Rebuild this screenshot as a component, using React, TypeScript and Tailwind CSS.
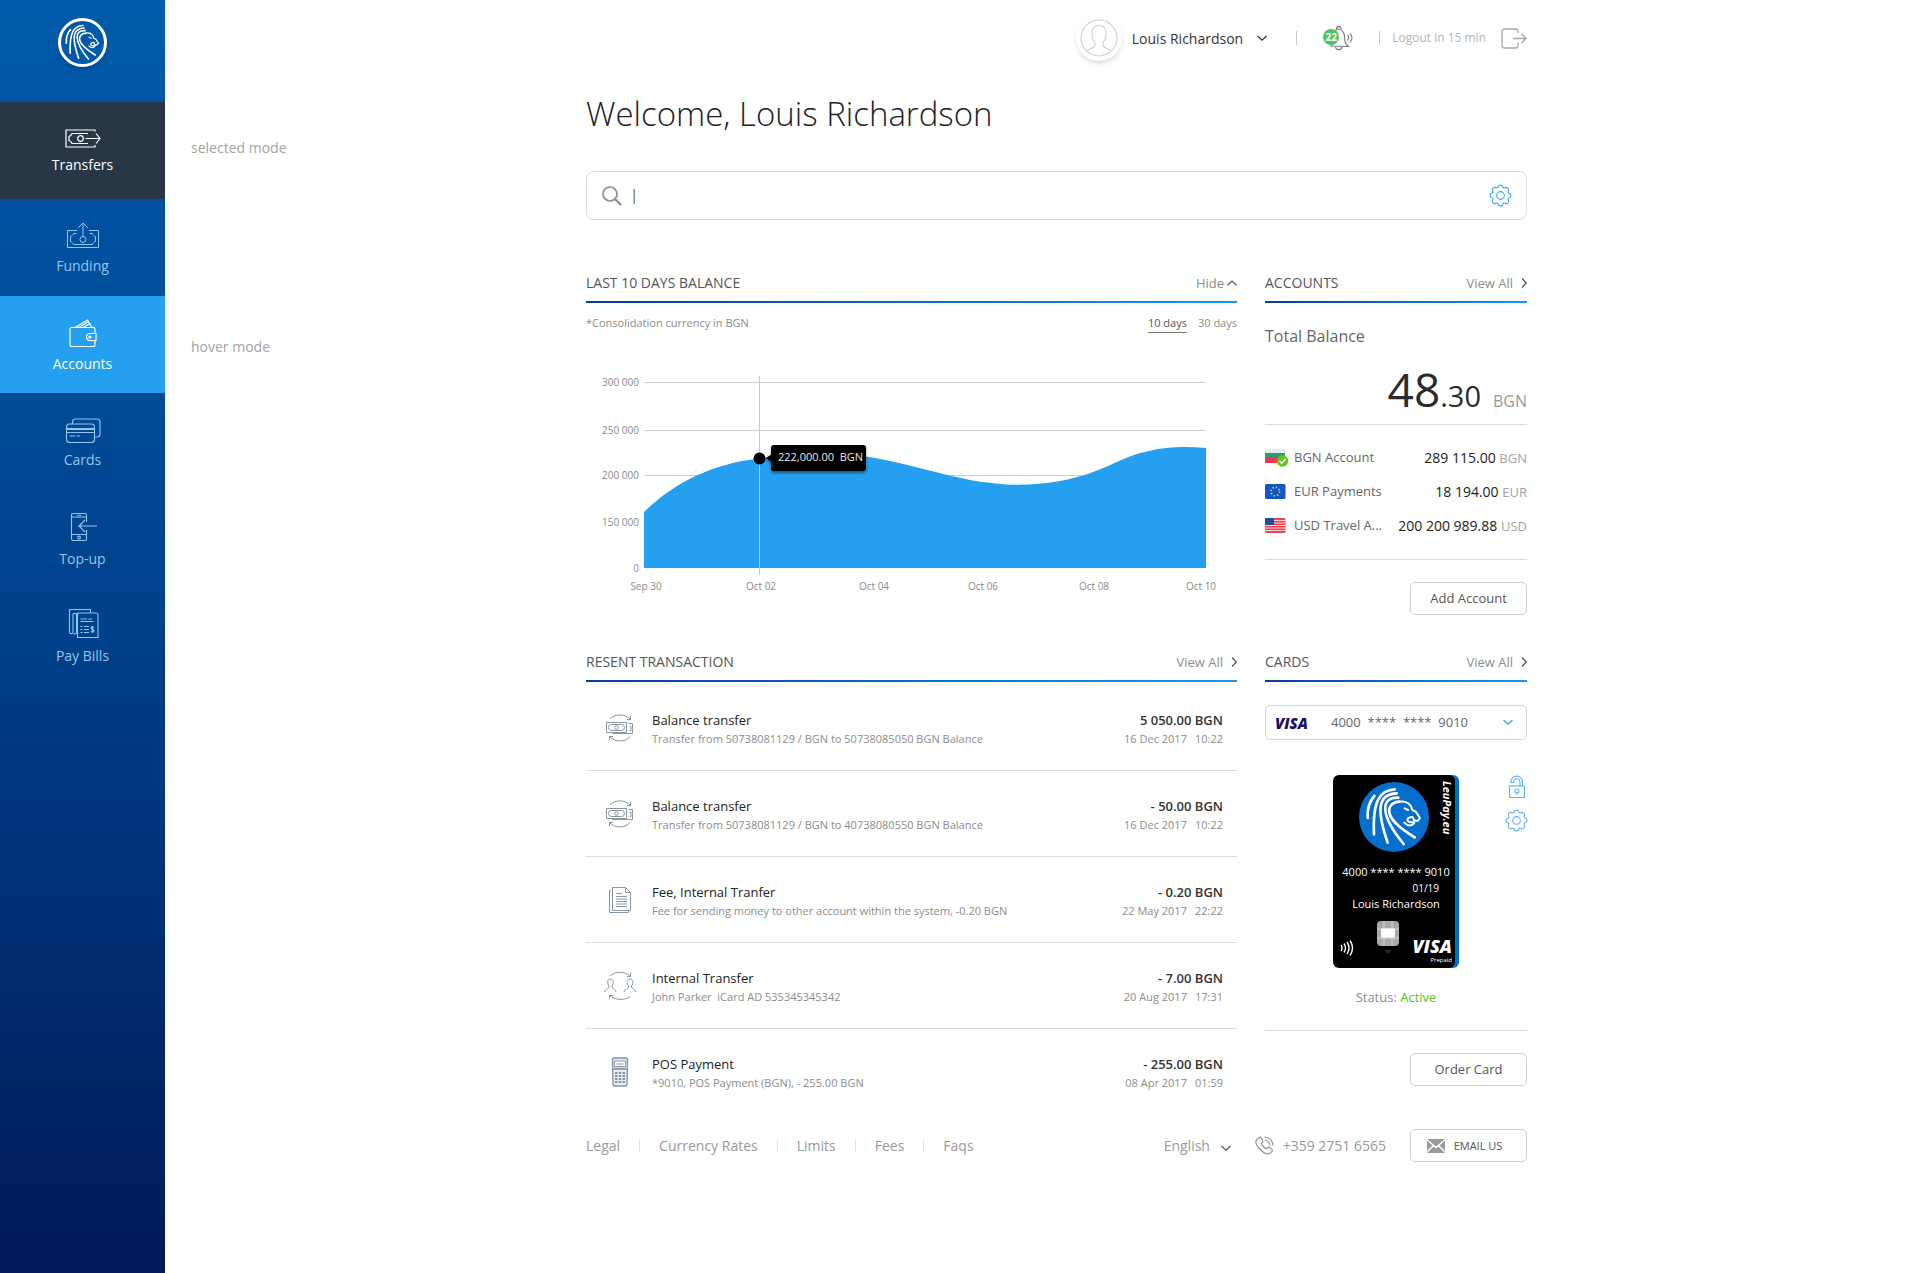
import React, { useState } from 'react';
import clsx from 'clsx';

type IconProps = { className?: string };

const LionMark = ({ className }: IconProps) => (
  <svg viewBox="0 0 210 210" className={className} fill="none" stroke="currentColor" strokeLinecap="round" strokeLinejoin="round">
    <g strokeWidth="8">
      <path d="M46 42 C32 58 24 84 26 108" />
      <path d="M107 22 C64 24 40 56 45 157" />
      <path d="M113 34 C56 36 52 84 86 182" />
      <path d="M118 47 C66 44 60 96 134 186" />
      <path d="M122 59 C98 60 86 76 92 96 C100 122 136 146 167 166" />
    </g>
    <g strokeWidth="6">
      <path d="M122 59 C142 56 156 66 160 84 L170 89 L183 108 L176 117 L165 115 L161 105 C150 104 142 112 147 118 C154 124 164 118 166 122 C160 134 144 132 136 122" />
      <path d="M137 79 L147 84" />
    </g>
  </svg>
);

const TransfersIcon = () => (
  <svg width="36" height="19" viewBox="0 0 36 19" fill="none" stroke="currentColor" strokeWidth="1.2">
    <path d="M30 2.5V1H1v17h29v-2" />
    <path d="M23 4.5H7C6.500 6 5.500 7 4 7.500v4c1.500.5 2.500 1.500 3 3h16" />
    <circle cx="15.500" cy="9.500" r="2.800" />
    <path d="M20.500 9.500H35M31 4.500l4 5-4 5" />
  </svg>
);

const FundingIcon = () => (
  <svg width="34" height="27" viewBox="0 0 34 27" fill="none" stroke="currentColor">
    <path d="M11 8.500H1.500v17h31v-17H23" />
    <path d="M10.500 11.500H7.500c-.5 1.500-1.500 2.500-3 3v5c1.500.5 2.500 1.500 3 3h19c.5-1.500 1.500-2.500 3-3v-5c-1.500-.5-2.500-1.500-3-3h-3" />
    <circle cx="17" cy="17.500" r="3" />
    <path d="M17 14.500V1M12 6l5-5 5 5" />
  </svg>
);

const WalletIcon = () => (
  <svg width="28" height="28" viewBox="0 0 28 28" fill="none" stroke="currentColor" strokeWidth="1.200">
    <path d="M26 14.500V10a1.500 1.500 0 0 0-1.500-1.500h-22A1.500 1.500 0 0 0 1 10v16a1.500 1.500 0 0 0 1.500 1.500h22A1.500 1.500 0 0 0 26 26v-4.500" />
    <path d="M27 14.500h-6a3.500 3.500 0 0 0 0 7h6z" />
    <circle cx="21" cy="18" r="1" />
    <path d="M6 8.500L18.500 1 23 8.500M9.500 8.500l10.500-6M14 8.500l7-4" />
  </svg>
);

const CardsIcon = () => (
  <svg width="36" height="26" viewBox="0 0 36 26" fill="none" stroke="currentColor" strokeWidth="1.100">
    <rect x="1.500" y="7" width="28" height="18.500" rx="3" />
    <path d="M7.500 7V5a3 3 0 0 1 3-3H32a3 3 0 0 1 3 3v12a3 3 0 0 1-3 3h-2" />
    <path d="M1.500 12h28" strokeWidth="2" />
    <path d="M1.500 15.500h28M4.500 19h5.500M11.500 19h3.500" />
  </svg>
);

const TopUpIcon = () => (
  <svg width="28" height="30" viewBox="0 0 28 30" fill="none" stroke="currentColor" strokeWidth="1.100">
    <path d="M17.500 10V3A1.500 1.500 0 0 0 16 1.500H4A1.500 1.500 0 0 0 2.500 3v24A1.500 1.500 0 0 0 4 28.500h12a1.500 1.500 0 0 0 1.500-1.500V18" />
    <path d="M2.500 5h15M2.500 22.500h15M8 3.300h4" />
    <circle cx="10" cy="25.500" r="1.400" />
    <path d="M28 14H10M16 8l-6 6 6 6" />
  </svg>
);

const BillsIcon = () => (
  <svg width="32" height="30" viewBox="0 0 32 30" fill="none" stroke="currentColor" strokeWidth="1.100">
    <path d="M23.500 3.500v-3h-21v23c0 1.500 3.500 1.500 3.500 0v-18c0-1.500 3.500-1.500 3.500 0v18c0 1.300-2 1.500-3 1.500" />
    <path d="M10.500 28.500V4h18.500a2 2 0 0 1 2 2v22.500z" />
    <path d="M13.500 10h6.500M21.500 10H25M13.500 12.500h13M13.500 17.500h2M17 17.500h5M13.500 20.500h2M17 20.500h5M13.500 23.500h2M17 23.500h5" />
    <path d="M27 18.500c-1-1.200-3-.8-3 .5 0 1.600 3 1 3 2.700 0 1.500-2.300 1.800-3.200.5M25.500 17v7" />
  </svg>
);

const GearIcon = ({ className }: IconProps) => (
  <svg viewBox="0 0 24 24" className={className} fill="none" stroke="currentColor" strokeWidth="1.200" strokeLinejoin="round">
    <path d="M9.680 2.690A2.500 2.500 0 0 1 14.320 2.690A1.600 1.600 0 0 0 16.940 3.770A2.500 2.500 0 0 1 20.230 7.060A1.600 1.600 0 0 0 21.310 9.680A2.500 2.500 0 0 1 21.310 14.320A1.600 1.600 0 0 0 20.230 16.940A2.500 2.500 0 0 1 16.940 20.230A1.600 1.600 0 0 0 14.320 21.310A2.500 2.500 0 0 1 9.680 21.310A1.600 1.600 0 0 0 7.060 20.230A2.500 2.500 0 0 1 3.770 16.940A1.600 1.600 0 0 0 2.690 14.320A2.500 2.500 0 0 1 2.690 9.680A1.600 1.600 0 0 0 3.770 7.060A2.500 2.500 0 0 1 7.060 3.770A1.600 1.600 0 0 0 9.680 2.690Z" />
    <circle cx="12" cy="12" r="4" />
  </svg>
);

const Chevron = ({ className, d }: IconProps & { d: string }) => (
  <svg width="10" height="10" viewBox="0 0 10 10" className={className} fill="none" stroke="currentColor" strokeWidth="1.200">
    <path d={d} />
  </svg>
);

const DOWN = 'M.5 3L5 7.200 9.500 3';
const UP = 'M.5 7.200L5 3l4.500 4.200';
const RIGHT = 'M5 .5L9.300 5 5 9.500';

const BalanceIcon = () => (
  <svg viewBox="0 0 32 32" className="size-8" fill="none" stroke="currentColor">
    <path d="M6 7C10 2 21 1 26.500 7.500M26.500 4v3.500H23M26 24.500C21 30.500 11 30.500 5.500 24.500M5.500 28v-3.500H9" />
    <path d="M2.500 10.500h20v10h-20zM24.500 11.500h4v10h-20M25.500 14.500h1.500v4h-1.500" />
    <rect x="4.500" y="12.500" width="16" height="6" rx="3" />
    <circle cx="12.500" cy="15.500" r="1.800" />
  </svg>
);

const FeeIcon = () => (
  <svg viewBox="0 0 32 32" className="size-8" fill="none" stroke="currentColor">
    <path d="M8.500 26.500v-23h13l5 5v18zM21.500 3.500v5h5" />
    <path d="M7 6.500H5.500v22h19V27" />
    <path d="M12 9.500h6M12 12.500h11M12 15h11M12 17.500h11M12 20h11M12 22.500h11" />
  </svg>
);

const PeopleIcon = () => (
  <svg viewBox="0 0 32 32" className="size-8" fill="none" stroke="currentColor">
    <path d="M6 6C11 1 21 1 26.500 6.500M26.500 3v3.500H23M26 26.500C21 30.500 11 30.500 5.500 25.500M5.500 29v-3.500H9" />
    <path d="M.5 22c.5-4 5-2.500 4.500-6-2-2.500-2-7 1.500-7s3.500 4.500 1.500 7c-.5 3.500 3.500 2 4 6" />
    <path d="M20 22c.5-4 5-2.500 4.500-6-2-2.500-2-7 1.500-7s3.500 4.500 1.500 7c-.5 3.500 3.500 2 4 6" />
  </svg>
);

const PosIcon = () => (
  <svg viewBox="0 0 32 32" className="size-8" fill="none" stroke="currentColor">
    <path d="M8.500 3.500a1.500 1.500 0 0 1 1.500-1.500h12a1.500 1.500 0 0 1 1.500 1.500L23 28.500a1.500 1.500 0 0 1-1.500 1.500h-11A1.500 1.500 0 0 1 9 28.500z" fill="#e9eef3" strokeWidth="1.400" />
    <path d="M10.500 5h11v5.500h-11zM12.500 8h7" fill="#fff" />
    <path d="M9.500 12.800h13" strokeWidth="2" />
    <path d="M11 17h2.500M14.800 17h2.500M18.500 17h2.500M11 20h2.500M14.800 20h2.500M18.500 20h2.500M11 23h2.500M14.800 23h2.500M18.500 23h2.500M11 26h2.500M14.800 26h2.500M18.500 26h2.500" strokeWidth="2" />
  </svg>
);

const navItems = [
  { label: 'Transfers', icon: TransfersIcon, state: 'selected' },
  { label: 'Funding', icon: FundingIcon },
  { label: 'Accounts', icon: WalletIcon, state: 'hover' },
  { label: 'Cards', icon: CardsIcon },
  { label: 'Top-up', icon: TopUpIcon },
  { label: 'Pay Bills', icon: BillsIcon },
];

const transactions = [
  { icon: BalanceIcon, title: 'Balance transfer', note: 'Transfer from 50738081129 / BGN to 50738085050 BGN Balance', amount: '5 050.00 BGN', date: '16 Dec 2017', time: '10:22' },
  { icon: BalanceIcon, title: 'Balance transfer', note: 'Transfer from 50738081129 / BGN to 40738080550 BGN Balance', amount: '- 50.00 BGN', date: '16 Dec 2017', time: '10:22' },
  { icon: FeeIcon, title: 'Fee, Internal Tranfer', note: 'Fee for sending money to other account within the system, -0.20 BGN', amount: '- 0.20 BGN', date: '22 May 2017', time: '22:22' },
  { icon: PeopleIcon, title: 'Internal Transfer', note: 'John Parker\u00a0 iCard AD 535345345342', amount: '- 7.00 BGN', date: '20 Aug 2017', time: '17:31' },
  { icon: PosIcon, title: 'POS Payment', note: '*9010, POS Payment (BGN), - 255.00 BGN', amount: '- 255.00 BGN', date: '08 Apr 2017', time: '01:59' },
];

const BulgariaFlag = () => (
  <svg width="24" height="18" viewBox="0 0 24 18">
    <rect x="0" y="0" width="20" height="5" fill="#e9e9e9" />
    <rect x="0" y="4" width="20" height="5" fill="#2c9a75" />
    <rect x="0" y="9" width="20" height="5" fill="#f0384f" />
    <circle cx="17.500" cy="12" r="5.800" fill="#5cc81e" />
    <path d="M14.500 12l2.300 2.200 3.700-4.200" fill="none" stroke="#fff" strokeWidth="1.500" />
  </svg>
);

const EuropeFlag = () => (
  <svg width="24" height="16" viewBox="0 0 24 16">
    <rect width="20.500" height="15" rx="1.500" fill="#1257c4" />
    <circle cx="10.250" cy="7.500" r="4.300" fill="none" stroke="#f2d43c" strokeWidth="1.600" strokeDasharray="1.400 1.977" />
  </svg>
);

const UsaFlag = () => (
  <svg width="24" height="16" viewBox="0 0 24 16">
    <rect width="20.500" height="15" rx="1.500" fill="#f5414f" />
    <path d="M0 2.500h20.500M0 5h20.500M0 7.500h20.500M0 10h20.500M0 12.500h20.500" stroke="#fbd5d8" />
    <rect width="9" height="7" fill="#1c5298" />
  </svg>
);

const accounts = [
  { flag: BulgariaFlag, name: 'BGN Account', amount: '289 115.00', currency: 'BGN' },
  { flag: EuropeFlag, name: 'EUR Payments', amount: '18 194.00', currency: 'EUR' },
  { flag: UsaFlag, name: 'USD Travel A...', amount: '200 200 989.88', currency: 'USD' },
];

const yLabels = [
  { text: '300 000', y: 12 },
  { text: '250 000', y: 60 },
  { text: '200 000', y: 105 },
  { text: '150 000', y: 152 },
  { text: '0', y: 198 },
];

const xLabels = [
  { text: 'Sep 30', x: 60 },
  { text: 'Oct 02', x: 175 },
  { text: 'Oct 04', x: 288 },
  { text: 'Oct 06', x: 397 },
  { text: 'Oct 08', x: 508 },
  { text: 'Oct 10', x: 615 },
];

const SectionHeader = ({ title, children }: { title: string; children: React.ReactNode }) => (
  <header>
    <div className="flex justify-between items-center pt-[5px] pb-2">
      <h2 className="text-[14px] leading-5 text-[#555]">{title}</h2>
      {children}
    </div>
    <div className="h-[2px] bg-linear-to-r from-[#0b3d91] to-[#1e95f0]" />
  </header>
);

const ViewAll = () => (
  <a href="#all" className="flex items-center gap-1 text-[13px] leading-5 text-[#8c8c8c]">
    View All
    <Chevron d={RIGHT} className="text-[#555]" />
  </a>
);

const BalanceChart = () => (
  <svg viewBox="0 0 651 230" className="w-full mt-[37px]" role="img" aria-label="Last 10 days balance">
    <defs>
      <filter id="tip" x="-10%" y="-20%" width="120%" height="160%">
        <feDropShadow dx="0" dy="2" stdDeviation="1.500" floodOpacity="0.450" />
      </filter>
    </defs>
    <path d="M58 12.500H620M58 60.500H620M58 105.500H620" stroke="#cfcfcf" />
    <path
      d="M58 142 C88 113 125 94 173 88.500 C210 83 248 81 283 87 C330 95 372 110 402 112.500 C425 116 448 115.500 474 111 C518 103 535 86 561 81.500 C582 76 602 76.500 620 78 V198 H58 Z"
      fill="#259ff0"
    />
    <path d="M173.500 6V205" stroke="#c4c9cd" />
    <circle cx="173.500" cy="88.500" r="6" fill="#000" />
    <g filter="url(#tip)">
      <rect x="185" y="75" width="95" height="26" rx="3" fill="#000" />
      <path d="M180 88l6-4v8z" fill="#000" />
    </g>
    <text x="192" y="91" fontSize="11" fill="#e6e6e6" xmlSpace="preserve">{'222,000.00\u00a0 BGN'}</text>
    <g fontSize="10" fill="#8a8a8a">
      {yLabels.map(l => (
        <text key={l.text} x="53" y={l.y + 4} textAnchor="end">{l.text}</text>
      ))}
      {xLabels.map(l => (
        <text key={l.text} x={l.x} y="220" textAnchor="middle">{l.text}</text>
      ))}
    </g>
  </svg>
);

const BankCard = () => (
  <div className="relative w-[126px] h-[193px] rounded-[6px] bg-[#006fd0] overflow-hidden text-white">
    <div className="h-full w-[122px] rounded-[6px] bg-black flex flex-col items-center">
      <div className="mt-[7px] size-[70px] rounded-full bg-[#066fce]">
        <LionMark className="size-full" />
      </div>
      <p className="mt-3 pl-1 text-[11px] leading-4 whitespace-nowrap">4000 **** **** 9010</p>
      <p className="self-end pr-4 text-[10px] leading-4">01/19</p>
      <p className="pl-1 text-[11px] leading-4 whitespace-nowrap">Louis Richardson</p>
      <svg width="24" height="34" viewBox="0 0 24 34" className="mt-2 mr-3 self-center">
        <rect x="1" y="1" width="22" height="25" rx="4" fill="#a9a9a9" />
        <path d="M1 9h22M1 18h22M8 1v25M16 1v25" stroke="#d8d8d8" />
        <rect x="5" y="8.500" width="14" height="9" rx="1" fill="#fff" />
        <path d="M8 30h8l-4 4z" fill="#2a2a2a" />
      </svg>
    </div>
    <span className="absolute top-[6px] right-[6px] text-[11px] leading-3 font-bold italic [writing-mode:vertical-rl]">LeuPay.eu</span>
    <svg width="14" height="18" viewBox="0 0 14 18" className="absolute left-[7px] bottom-[11px]" fill="none" stroke="#fff" strokeWidth="1.400">
      <path d="M1 6q2 3 0 6M4 4.500q3 4.500 0 9M7 3q4 6 0 12M10 1.500q5 7.500 0 15" />
    </svg>
    <div className="absolute right-[7px] bottom-1 text-right">
      <p className="text-[18px] leading-5 font-extrabold italic">VISA</p>
      <p className="text-[6px] leading-2">Prepaid</p>
    </div>
  </div>
);

const outlineButton = 'h-[33px] w-[117px] rounded-[5px] border border-[#cfcfcf] text-[#555] flex items-center justify-center';

export default function App() {
  const [query, setQuery] = useState('');
  const [days, setDays] = useState(10);

  return (
    <div className="min-h-screen flex bg-white font-['Open_Sans',sans-serif]">
      {/* Sidebar */}
      <nav className="w-[165px] shrink-0 bg-linear-to-b from-[#005bab] via-[#00408a] to-[#001a57]">
        <a href="#home" aria-label="Home" className="h-[102px] flex justify-center pt-[18px]">
          <span className="size-[49px] rounded-full border-[3px] border-white bg-[#0059a8] text-white shadow-md">
            <LionMark className="size-full" />
          </span>
        </a>
        {navItems.map(({ label, icon: Icon, state }) => (
          <a
            key={label}
            href={`#${label}`}
            className={clsx(
              'h-[97px] pt-[3px] flex flex-col items-center justify-center gap-[7px] text-[14px] leading-5',
              state === 'selected' && 'bg-[#283645] text-white',
              state === 'hover' && 'bg-[#259ff0] text-white',
              !state && 'text-[#94c6f2]'
            )}
          >
            <Icon />
            {label}
          </a>
        ))}
      </nav>

      <div className="flex-1 flex">
        {/* State captions */}
        <aside className="w-[421px] shrink-0 pl-[26px] pt-[138px] text-[14px] leading-5 text-[#a3a3a3] space-y-[179px]">
          <p>selected mode</p>
          <p>hover mode</p>
        </aside>

        <div className="flex-1 max-w-[941px] pt-[15px]">
          {/* Top bar */}
          <div className="h-[46px] flex items-center justify-end">
            <button className="flex items-center text-[14px] text-[#333]">
              <span className="size-[46px] rounded-full bg-white shadow-md flex items-center justify-center text-[#cfcfcf]">
                <svg width="38" height="38" viewBox="0 0 38 38" fill="none" stroke="currentColor" strokeWidth="1.100">
                  <circle cx="19" cy="19" r="18" />
                  <path d="M7 32.500c2-3 7-3 8-6 .3-1.500 0-2.500-.5-3.500-2-2-2.500-5-2.500-9 0-5 3-7.500 7-7.500s7 2.500 7 7.500c0 4-.5 7-2.500 9-.5 1-.8 2-.5 3.500 1 3 6 3 8 6" />
                </svg>
              </span>
              <span className="ml-[10px]">Louis Richardson</span>
              <Chevron d={DOWN} className="ml-[14px]" />
            </button>
            <span className="ml-[29px] w-px h-[14px] bg-[#c8c8c8]" />
            <button aria-label="Notifications" className="relative ml-[26px] w-[30px] h-[26px]">
              <svg width="30" height="26" viewBox="0 0 30 26" fill="none" stroke="#777" strokeWidth="1.100">
                <path d="M8 21c3-2 2-5 2.500-10C11 6 13.500 4 15.500 4s5.500 2 6 7c.5 5 0 7.500 4 10.500z" />
                <path d="M13.500 4c0-3.500 4.500-3.500 4.500 0M12.500 22c.5 3.500 6 3.500 6.500 0M24.500 9.500c1.500 2 1.500 4 0 6M27 8c2.500 3 2.500 6.500 0 9.500" />
              </svg>
              <span className="absolute left-0 top-[4px] size-4 rounded-full bg-[#4cc763] text-white text-[10px] leading-4 font-bold text-center">22</span>
            </button>
            <span className="ml-[26px] w-px h-[14px] bg-[#c8c8c8]" />
            <button className="ml-3 flex items-center gap-[15px] text-[12px] text-[#b3b3b3]">
              Logout in 15 min
              <svg width="26" height="21" viewBox="0 0 26 21" fill="none" stroke="#a8a8a8" strokeWidth="1.300">
                <path d="M17 5V3.500a2.500 2.500 0 0 0-2.500-2.500h-11A2.500 2.500 0 0 0 1 3.500v14A2.500 2.500 0 0 0 3.500 20h11a2.500 2.500 0 0 0 2.500-2.500V15M12 10.500h13M20.500 6l4.500 4.500-4.500 4.500" />
              </svg>
            </button>
          </div>

          <h1 className="mt-[33px] text-[33px] leading-10 font-light text-[#222]">Welcome, Louis Richardson</h1>

          {/* Search */}
          <div className="mt-[37px] h-[49px] flex items-center rounded-[8px] border border-[#dcdcdc] pl-[15px] pr-[14px]">
            <svg width="20" height="20" viewBox="0 0 20 20" fill="none" stroke="#8e8e8e" strokeWidth="1.700">
              <circle cx="8" cy="8" r="7" />
              <path d="M13 13l6 6" strokeWidth="2.400" />
            </svg>
            <input
              aria-label="Search"
              value={query}
              onChange={e => setQuery(e.target.value)}
              placeholder="|"
              className="flex-1 ml-2 pb-[3px] text-[15px] leading-6 text-[#333] placeholder:text-[#555] outline-none"
            />
            <button aria-label="Search settings" className="text-[#3ba7f2]">
              <GearIcon className="size-[23px]" />
            </button>
          </div>

          <div className="mt-12 grid grid-cols-[minmax(0,1fr)_262px] gap-x-7 gap-y-8">
            {/* Balance history */}
            <section>
              <SectionHeader title="LAST 10 DAYS BALANCE">
                <button className="flex items-center gap-[3px] text-[13px] leading-5 text-[#8c8c8c]">
                  Hide
                  <Chevron d={UP} className="text-[#555]" />
                </button>
              </SectionHeader>
              <div className="mt-3 flex items-start text-[11px] leading-4 text-[#8c8c8c]">
                <p className="flex-1">*Consolidation currency in BGN</p>
                <button
                  onClick={() => setDays(10)}
                  className={clsx('border-b pb-px', days === 10 ? 'text-[#555] border-[#777]' : 'border-transparent')}
                >
                  10 days
                </button>
                <button
                  onClick={() => setDays(30)}
                  className={clsx('ml-[11px] border-b pb-px', days === 30 ? 'text-[#555] border-[#777]' : 'border-transparent')}
                >
                  30 days
                </button>
              </div>
              <BalanceChart />
            </section>

            {/* Accounts */}
            <section>
              <SectionHeader title="ACCOUNTS">
                <ViewAll />
              </SectionHeader>
              <h3 className="mt-[21px] text-[16px] leading-6 text-[#666]">Total Balance</h3>
              <p className="mt-[17px] pb-[11px] flex items-baseline justify-end text-[#2b2b2b] border-b border-[#d9d9d9]">
                <span className="text-[46px] leading-[48px]">48</span>
                <span className="text-[29px] leading-6">.30</span>
                <span className="ml-3 text-[16px] leading-6 text-[#999]">BGN</span>
              </p>
              <ul className="py-4 border-b border-[#d9d9d9]">
                {accounts.map(({ flag: Flag, name, amount, currency }) => (
                  <li key={name} className="h-[34px] flex items-center">
                    <Flag />
                    <span className="ml-[5px] flex-1 text-[13px] text-[#666]">{name}</span>
                    <span className="text-[14px] text-[#222]">
                      {amount} <span className="text-[13px] text-[#a3a3a3]">{currency}</span>
                    </span>
                  </li>
                ))}
              </ul>
              <div className="mt-[22px] flex justify-end">
                <button className={clsx(outlineButton, 'text-[13px]')}>Add Account</button>
              </div>
            </section>

            {/* Transactions */}
            <section>
              <SectionHeader title="RESENT TRANSACTION">
                <ViewAll />
              </SectionHeader>
              <ul className="pt-[3px]">
                {transactions.map(({ icon: Icon, title, note, amount, date, time }, i) => (
                  <li key={i} className="h-[86px] pt-[25px] pl-[18px] pr-[14px] flex border-b border-[#dcdcdc] last:border-0">
                    <span className="pt-[2px] text-[#8796a5]">
                      <Icon />
                    </span>
                    <div className="ml-4 flex-1">
                      <p className="text-[13px] leading-5 text-[#222]">{title}</p>
                      <p className="text-[11px] leading-[18px] text-[#8c8c8c]">{note}</p>
                    </div>
                    <div className="text-right">
                      <p className="text-[13px] leading-5 font-semibold text-[#333]">{amount}</p>
                      <p className="text-[11px] leading-[18px] text-[#8c8c8c]">
                        {date}
                        <span className="ml-2">{time}</span>
                      </p>
                    </div>
                  </li>
                ))}
              </ul>
            </section>

            {/* Cards */}
            <section>
              <SectionHeader title="CARDS">
                <ViewAll />
              </SectionHeader>
              <div className="relative mt-[23px]">
                <span className="absolute left-[10px] top-[10px] text-[15px] leading-4 font-extrabold italic text-[#1a1166]">VISA</span>
                <select aria-label="Card" className="appearance-none w-full h-[35px] pl-[65px] rounded-[5px] border border-[#d4d4d4] text-[13px] text-[#666]">
                  <option>{'4000\u00a0 ****\u00a0 ****\u00a0 9010'}</option>
                </select>
                <Chevron d={DOWN} className="absolute right-[14px] top-3 text-[#259ff0]" />
              </div>
              <div className="relative mt-[35px] flex justify-center">
                <BankCard />
                <div className="absolute -right-px top-0 flex flex-col items-center gap-[11px] text-[#5cb4f2]">
                  <button aria-label="Unlock card">
                    <svg width="18" height="23" viewBox="0 0 18 23" fill="none" stroke="currentColor" strokeWidth="1.100">
                      <rect x="1.500" y="11" width="15" height="11.500" />
                      <path d="M14.500 11V7.500C14.500-1 3-1 3 7.500h2.500c0-5 6.500-5 6.500 0V11" />
                      <circle cx="9" cy="16" r="2" />
                      <path d="M9 18v2" />
                    </svg>
                  </button>
                  <button aria-label="Card settings">
                    <GearIcon className="size-[23px]" />
                  </button>
                </div>
              </div>
              <p className="mt-[19px] text-center text-[13px] leading-5 text-[#8c8c8c]">
                Status: <span className="text-[#52c41a]">Active</span>
              </p>
              <div className="mt-[23px] pt-[22px] border-t border-[#dcdcdc] flex justify-end">
                <button className={clsx(outlineButton, 'text-[13px]')}>Order Card</button>
              </div>
            </section>
          </div>

          {/* Footer */}
          <footer className="mt-[14px] flex items-center text-[14px] leading-5 text-[#999]">
            <div className="flex items-center divide-x divide-[#e2e2e2] flex-1">
              {['Legal', 'Currency Rates', 'Limits', 'Fees', 'Faqs'].map(item => (
                <span key={item} className="h-3 flex items-center px-[19px] first:pl-0">
                  <a href={`#${item}`}>{item}</a>
                </span>
              ))}
            </div>
            <div className="relative">
              <select aria-label="Language" className="appearance-none pr-5">
                <option>English</option>
              </select>
              <Chevron d={DOWN} className="absolute right-0 top-[7px] text-[#555]" />
            </div>
            <a href="tel:+35927516565" className="ml-6 flex items-center gap-[9px]">
              <svg width="19" height="19" viewBox="0 0 19 19" fill="none" stroke="#8c8c8c" strokeWidth="1.100">
                <path d="M4.500 1.500L1.800 3.600C0 5.500 1.500 9.500 4.800 13c3.600 3.800 7.700 5.700 9.900 4.600l2.300-2.200c.6-.6.500-1.200 0-1.700l-2.600-2.200c-.6-.5-1.200-.4-1.700.1l-1.200 1.200c-1.800-.5-4.500-3.200-5.200-5.200l1.200-1.200c.5-.5.500-1.100.1-1.700L6.200 1.600c-.5-.6-1.200-.6-1.700-.1z" />
                <path d="M9.500 1c4.500 0 8.300 3.500 8.500 8.500M9.500 4c3 0 5.300 2.500 5.500 5.500" />
              </svg>
              +359 2751 6565
            </a>
            <button className={clsx(outlineButton, 'ml-6 pr-2 text-[11px] gap-[9px]')}>
              <svg width="18" height="14" viewBox="0 0 18 14" fill="#9a9a9a">
                <path d="M0 0h18L9 7.500zM0 1.500l5.500 5L0 12zM18 1.500V12l-5.500-5.500zM0 14l6.500-6.500L9 9.500l2.500-2L18 14z" />
              </svg>
              EMAIL US
            </button>
          </footer>
        </div>
      </div>
    </div>
  );
}
